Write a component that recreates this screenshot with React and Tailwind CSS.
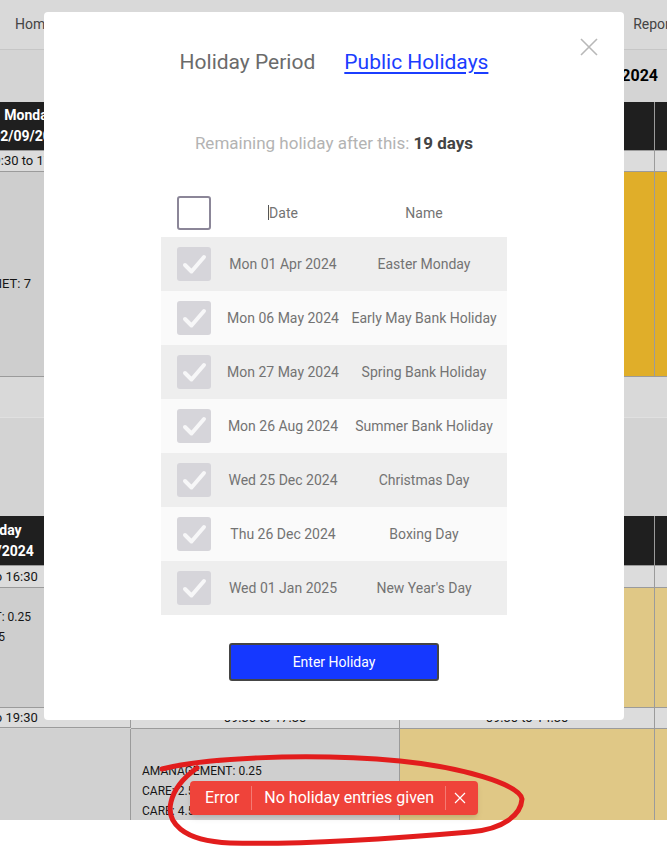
import React from "react";

const holidays = [
  ["Mon 01 Apr 2024", "Easter Monday"],
  ["Mon 06 May 2024", "Early May Bank Holiday"],
  ["Mon 27 May 2024", "Spring Bank Holiday"],
  ["Mon 26 Aug 2024", "Summer Bank Holiday"],
  ["Wed 25 Dec 2024", "Christmas Day"],
  ["Thu 26 Dec 2024", "Boxing Day"],
  ["Wed 01 Jan 2025", "New Year's Day"],
];

const cols = "grid grid-cols-[206px_269px_255px_120px] -ml-[75px]";
const cell = "border-r border-b border-[#9b9b9b]";

// Schedule page sitting behind the dialog
const SchedulePage = () => (
  <div className="h-[820px] overflow-hidden bg-[#d4d4d4] text-[13px] text-[#161616]">
    <div className="h-[50px] w-[697px] flex items-center justify-between px-[15px] border-b border-[#c6c6c6] bg-[#d9d9d9] text-[14px] text-[#444]">
      <span>Home</span>
      <span>Reports</span>
    </div>
    <div className="h-[52px] flex items-center justify-end pr-[9px] text-[16px] font-bold text-black">
      September 2024
    </div>

    {/* first week */}
    <div className={cols}>
      <div className={`${cell} h-[49px] bg-[#1f1f1f] border-[#4a4a4a] flex flex-col items-center justify-center pl-[4px] text-white font-bold text-[14px] leading-[21px]`}>
        <span>Monday</span>
        <span>02/09/2024</span>
      </div>
      <div className={`${cell} bg-[#1f1f1f] border-[#4a4a4a]`} />
      <div className={`${cell} bg-[#1f1f1f] border-[#4a4a4a]`} />
      <div className={`${cell} bg-[#1f1f1f] border-[#4a4a4a]`} />

      <div className={`${cell} h-[21px] bg-[#dcdcdc] flex items-center justify-center`}>09:30 to 17:30</div>
      <div className={`${cell} bg-[#dcdcdc] flex items-center justify-center`}>09:30 to 17:30</div>
      <div className={`${cell} bg-[#dcdcdc] flex items-center justify-center`}>09:30 to 14:30</div>
      <div className={`${cell} bg-[#dcdcdc]`} />

      <div className={`${cell} h-[205px] bg-[#cecece] flex items-center justify-end pr-[99px] pt-[20px] whitespace-nowrap`}>CABINET: 7</div>
      <div className={`${cell} bg-[#cdcdcd]`} />
      <div className={`${cell} bg-[#e0ae29]`} />
      <div className={`${cell} bg-[#e0ae29]`} />
    </div>
    <div className="h-[41px] bg-[#d9d9d9] border-b border-[#e0e0e0]" />
    <div className="h-[98px] bg-[#d3d3d3]" />

    {/* second week */}
    <div className={cols}>
      <div className={`${cell} h-[50px] bg-[#1f1f1f] border-[#4a4a4a] flex flex-col items-center justify-center pr-[62px] text-white font-bold text-[14px] leading-[21px]`}>
        <span>Monday</span>
        <span>09/09/2024</span>
      </div>
      <div className={`${cell} bg-[#1f1f1f] border-[#4a4a4a]`} />
      <div className={`${cell} bg-[#1f1f1f] border-[#4a4a4a]`} />
      <div className={`${cell} bg-[#1f1f1f] border-[#4a4a4a]`} />

      <div className={`${cell} h-[22px] bg-[#dcdcdc] flex items-center justify-center pr-[62px]`}>09:00 to 16:30</div>
      <div className={`${cell} bg-[#dcdcdc] flex items-center justify-center`}>09:30 to 17:30</div>
      <div className={`${cell} bg-[#dcdcdc] flex items-center justify-center`}>09:30 to 14:30</div>
      <div className={`${cell} bg-[#dcdcdc]`} />

      <div className={`${cell} h-[120px] bg-[#cecece] pt-[19px] leading-5 flex flex-col items-end whitespace-nowrap text-[12px]`}>
        <div className="pr-[99px]">MANAGEMENT: 0.25</div>
        <div className="pr-[125px]">CARE: 2.5</div>
      </div>
      <div className={`${cell} bg-[#cdcdcd]`} />
      <div className={`${cell} bg-[#e0c886]`} />
      <div className={`${cell} bg-[#e0c886]`} />

      <div className={`${cell} h-[20px] bg-[#dcdcdc] flex items-center justify-center pr-[62px]`}>09:00 to 19:30</div>
      <div className={`${cell} bg-[#dcdcdc] flex items-center justify-center`}>09:30 to 17:30</div>
      <div className={`${cell} bg-[#dcdcdc] flex items-center justify-center`}>09:30 to 14:30</div>
      <div className={`${cell} bg-[#dcdcdc]`} />

      <div className={`${cell} h-[92px] bg-[#d1d1d1]`} />
      <div className={`${cell} bg-[#cfcfcf] pt-[32px] pl-[11px] text-[12px] leading-5`}>
        <div>AMANAGEMENT: 0.25</div>
        <div>CARE: 2.5</div>
        <div>CARE: 4.5</div>
      </div>
      <div className={`${cell} bg-[#e0c886]`} />
      <div className={`${cell} bg-[#e0c886]`} />
    </div>
  </div>
);

const Tick = () => (
  <svg width="34" height="34" viewBox="0 0 34 34">
    <path d="M8 18 L14.5 24.5 L27 10" fill="none" stroke="#f7f7f8" strokeWidth="4" strokeLinecap="round" strokeLinejoin="round" />
  </svg>
);

const HolidayDialog = () => (
  <div className="absolute left-[44px] top-[12px] w-[580px] h-[708px] bg-white rounded-[4px] flex flex-col items-center pt-[37px]">
    <button className="absolute top-[26px] right-[26px] w-[18px] h-[18px]">
      <svg width="18" height="18" viewBox="0 0 18 18">
        <path d="M1 1 L17 17 M17 1 L1 17" stroke="#b8b8b8" strokeWidth="1.6" />
      </svg>
    </button>

    <div className="h-[28px] flex items-center gap-[29px] text-[21px]">
      <span className="text-[#6b6b6b]">Holiday Period</span>
      <span className="text-[#1b3dff] underline underline-offset-[3px] decoration-2">Public Holidays</span>
    </div>

    <p className="mt-[54px] h-[24px] text-[17px] leading-6 text-[#b3b3b3]">
      Remaining holiday after this: <b className="text-[#444]">19 days</b>
    </p>

    <div className="mt-[34px] w-[346px] text-[14px] text-[#737373]">
      <div className="h-[48px] flex items-center">
        <div className="w-[64px] pl-[16px]">
          <div className="w-[34px] h-[34px] border-2 border-[#8b8698] rounded-[3px]" />
        </div>
        <div className="w-[116px] text-center">
          <span className="inline-block w-px h-[15px] bg-[#555] align-[-2px]" />Date
        </div>
        <div className="w-[166px] text-center">Name</div>
      </div>
      {holidays.map(([date, name], i) => (
        <div key={i} className={`h-[54px] flex items-center ${i % 2 === 0 ? "bg-[#eeeeee]" : "bg-[#fafafa]"}`}>
          <div className="w-[64px] pl-[16px]">
            <div className="w-[34px] h-[34px] bg-[#d6d5da] rounded-[3px]">
              <Tick />
            </div>
          </div>
          <div className="w-[116px] text-center whitespace-nowrap">{date}</div>
          <div className="w-[166px] text-center whitespace-nowrap">{name}</div>
        </div>
      ))}
    </div>

    <button className="mt-[28px] w-[210px] h-[38px] bg-[#1538ff] border-2 border-[#454545] rounded-[3px] text-white text-[14px]">
      Enter Holiday
    </button>
  </div>
);

const ErrorToast = () => (
  <div className="absolute left-[190px] top-[781px] h-[34px] flex items-center bg-[#ef433a] rounded-[4px] shadow-md text-white text-[16px]">
    <span className="pl-[15px] pr-[12px]">Error</span>
    <span className="w-px h-[24px] bg-[#f47a73]" />
    <span className="pl-[12px] pr-[11px] whitespace-nowrap">No holiday entries given</span>
    <span className="w-px h-[24px] bg-[#f47a73]" />
    <span className="pl-[8px] pr-[12px] flex items-center">
      <svg width="12" height="12" viewBox="0 0 12 12">
        <path d="M1 1 L11 11 M11 1 L1 11" stroke="white" strokeWidth="1.2" />
      </svg>
    </span>
  </div>
);

export default function App() {
  return (
    <div className="relative w-[667px] h-[850px] overflow-hidden bg-white font-[Roboto,sans-serif]">
      <SchedulePage />
      <HolidayDialog />
      <ErrorToast />
      {/* hand-drawn marker ring round the toast */}
      <svg className="absolute left-0 top-0 pointer-events-none" width="667" height="850" viewBox="0 0 667 850">
        <path
          d="M162 769 C 200 759, 300 752, 400 761 C 460 767, 520 784, 522 799 C 521 814, 505 829, 470 832 C 400 838, 300 845, 230 843 C 182 841, 166 822, 171 802 C 174 789, 183 778, 197 768"
          fill="none"
          stroke="#e21d1d"
          strokeWidth="5"
          strokeLinecap="round"
          strokeLinejoin="round"
        />
      </svg>
    </div>
  );
}
